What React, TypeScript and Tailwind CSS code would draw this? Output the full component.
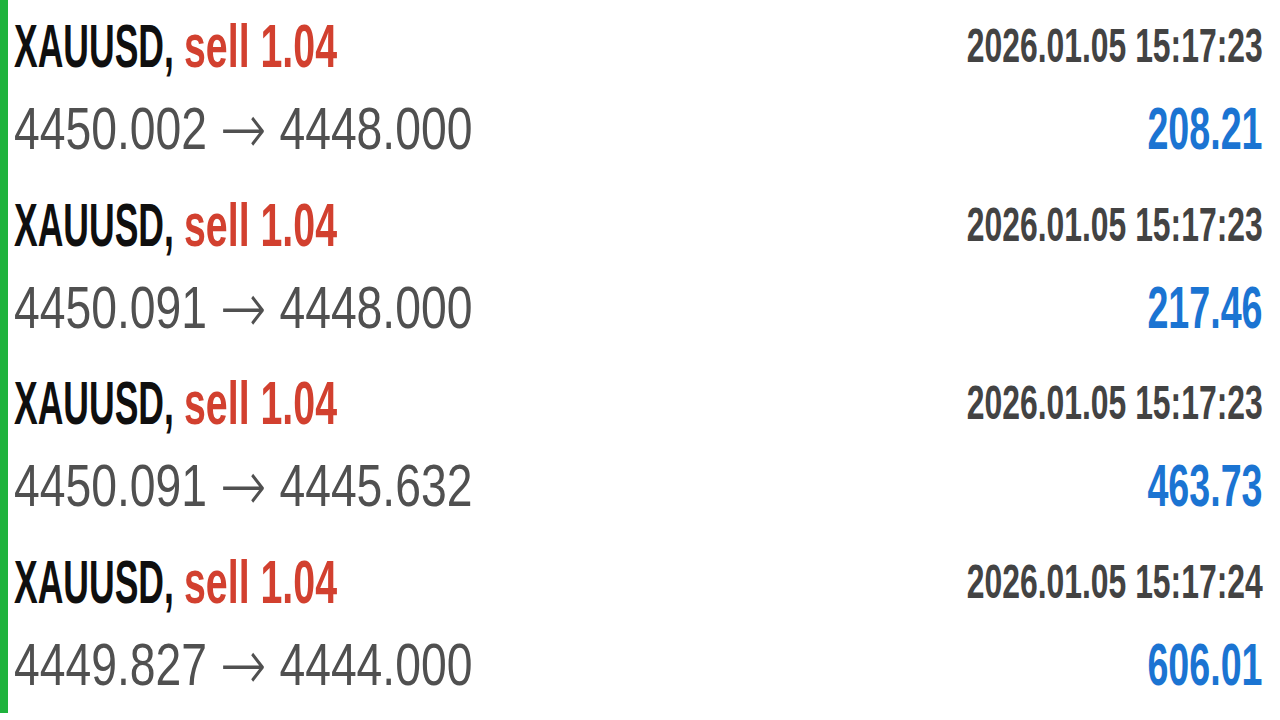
import React from "react";

const rows = [
  { open: "4450.002", close: "4448.000", time: "2026.01.05 15:17:23", profit: "208.21" },
  { open: "4450.091", close: "4448.000", time: "2026.01.05 15:17:23", profit: "217.46" },
  { open: "4450.091", close: "4445.632", time: "2026.01.05 15:17:23", profit: "463.73" },
  { open: "4449.827", close: "4444.000", time: "2026.01.05 15:17:24", profit: "606.01" },
];

export default function App() {
  return (
    <div className="w-[1280px] h-[720px] bg-white flex overflow-hidden font-['Liberation_Sans','DejaVu_Sans',Arial,sans-serif]">
      <div className="w-[8px] h-[713px] bg-[#1fb33d] shrink-0" />
      <div className="flex-1 flex flex-col">
        {rows.map((r, i) => (
          <div key={i} className="h-[178.5px] pt-[15px] pl-[6px] pr-[17px] shrink-0">
            <div className="flex items-start justify-between h-[62px]">
              <div className="flex text-[62px] leading-none font-bold whitespace-nowrap">
                <span className="inline-block w-[160px]">
                  <span className="inline-block origin-left scale-x-[0.573] text-[#0f0f0f]">XAUUSD,</span>
                </span>
                <span className="inline-block ml-[10px]">
                  <span className="inline-block origin-left scale-x-[0.634] text-[#d2402f]">sell 1.04</span>
                </span>
              </div>
              <div className="mt-[7px] text-[48px] leading-none font-bold text-[#434343] origin-right scale-x-[0.664] whitespace-nowrap">
                {r.time}
              </div>
            </div>
            <div className="mt-[22px] flex items-center justify-between h-[60px]">
              <div className="flex items-center text-[60px] leading-none text-[#505050] origin-left scale-x-[0.771] whitespace-nowrap">
                <span>{r.open}</span>
                <span className="inline-block w-[94px] text-center font-['DejaVu_Sans',sans-serif] font-extralight text-[72px] leading-none">→</span>
                <span>{r.close}</span>
              </div>
              <div className="text-[60px] leading-none font-bold text-[#1b74d2] origin-right scale-x-[0.627] whitespace-nowrap">
                {r.profit}
              </div>
            </div>
          </div>
        ))}
      </div>
    </div>
  );
}
